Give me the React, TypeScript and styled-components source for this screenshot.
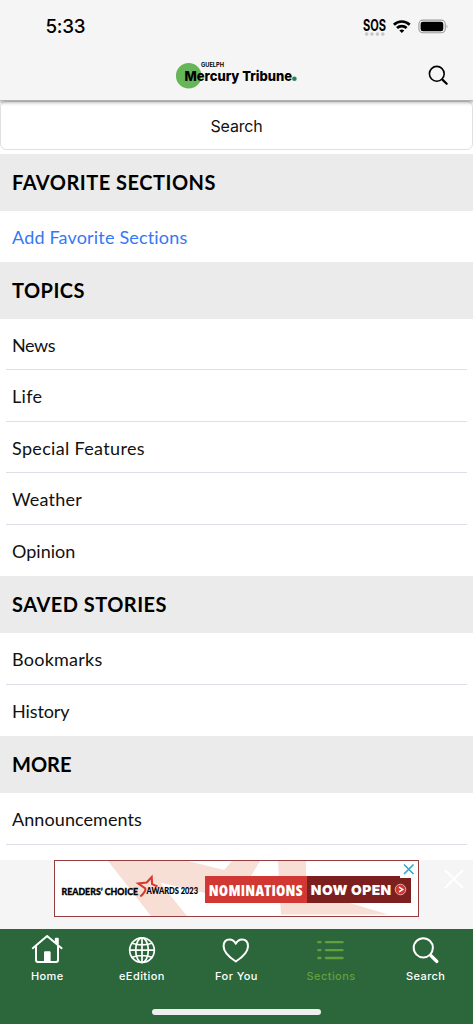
import React from 'react';
import styled, { createGlobalStyle } from 'styled-components';

const GlobalStyle = createGlobalStyle`
  * { box-sizing: border-box; }
  body { margin: 0; background: #fff; color: #000; }
`;

const Screen = styled.div`
  width: 100%;
  max-width: 473px;
  height: 1024px;
  display: flex;
  flex-direction: column;
  overflow: hidden;
  background: #fff;
  font-family: Lato, sans-serif;
`;

const Header = styled.header`
  position: relative;
  z-index: 1;
  flex: 0 0 100px;
  background: #f5f5f5;
  box-shadow: 0 1px 4px 1px rgba(0, 0, 0, 0.4);
`;

const StatusBar = styled.div`
  height: 52px;
  padding: 1px 25px 0 45.5px;
  display: flex;
  align-items: center;
  justify-content: space-between;
`;

const Clock = styled.span`
  font: 500 18.8px/24px Inter, sans-serif;
  letter-spacing: -0.3px;
`;

const StatusIcons = styled.div`
  display: flex;
  align-items: center;
`;

const TitleBar = styled.div`
  height: 48px;
  padding: 0 24px 0 175px;
  display: flex;
  align-items: center;
  justify-content: space-between;
`;

const SearchButton = styled.button`
  flex: 0 0 49px;
  margin: 1px 0 3.6px;
  border: 1px solid #e0e0e0;
  border-radius: 6px;
  background: #fff;
  color: #111;
  padding: 1px 0 0;
  font: 400 16px/46px Inter, sans-serif;
  letter-spacing: -0.2px;
`;

const Content = styled.main`
  flex: 1 1 0;
  min-height: 0;
  overflow: hidden;
`;

const SectionHeading = styled.h2<{ $track: number }>`
  margin: 0;
  height: 57px;
  padding: 0 12px;
  background: #ebebeb;
  font-size: 20px;
  font-weight: 700;
  line-height: 57px;
  letter-spacing: ${p => p.$track}px;
`;

const Row = styled.div<{ $track: number; $link?: boolean; $divided: boolean }>`
  height: 51.45px;
  margin: 0 6px;
  padding: 0 6px;
  border-bottom: ${p => (p.$divided ? '1.4px solid #dfdfe8' : 'none')};
  color: ${p => (p.$link ? '#3478f6' : '#111')};
  font-size: 18px;
  line-height: 52px;
  letter-spacing: ${p => p.$track}px;
  font-variant-ligatures: none;
`;

const AdBar = styled.aside`
  position: relative;
  flex: 0 0 69px;
  padding-left: 54px;
  background: #f5f5f5;
`;

const AdClose = styled.svg`
  position: absolute;
  left: 444px;
  top: 9px;
`;

const Banner = styled.div`
  position: relative;
  width: 365px;
  height: 57px;
  border: 1px solid #963d40;
  background: #fff;
  display: flex;
  align-items: center;
  padding: 1px 7px 0 6px;
`;

const BannerArt = styled.svg`
  position: absolute;
  inset: 0;
`;

const AwardsLogo = styled.svg`
  position: relative;
  flex: 0 0 144px;
`;

const Strip = styled.div<{ $bg: string; $width: number }>`
  position: relative;
  width: ${p => p.$width}px;
  height: 27px;
  background: ${p => p.$bg};
  color: #fff;
  display: flex;
  align-items: center;
  justify-content: center;
  gap: 2px;
  white-space: nowrap;
`;

const StripText = styled.span<{ $size: number; $track: number; $black?: boolean }>`
  padding-top: 1px;
  font-family: ${p => (p.$black ? 'Inter' : '"Open Sans"')}, sans-serif;
  font-size: ${p => p.$size}px;
  font-weight: ${p => (p.$black ? 900 : 800)};
  font-stretch: ${p => (p.$black ? '100%' : '75%')};
  letter-spacing: ${p => p.$track}px;
`;

const AdChoice = styled.svg`
  position: absolute;
  right: 0;
  top: 0;
  background: #fff;
`;

const TabBar = styled.nav`
  position: relative;
  flex: 0 0 95px;
  display: grid;
  grid-template-columns: repeat(5, 1fr);
  background: #2b673b;
`;

const Tab = styled.div<{ $active?: boolean }>`
  display: flex;
  flex-direction: column;
  align-items: center;
  padding-top: 4px;
  color: ${p => (p.$active ? '#659f3c' : '#fff')};
  font: 500 11px/14px Inter, sans-serif;
  letter-spacing: 0.42px;
  svg { display: block; margin-bottom: 2px; }
`;

const HomeIndicator = styled.div`
  position: absolute;
  left: 152px;
  bottom: 9px;
  width: 169px;
  height: 6px;
  border-radius: 3px;
  background: #eee;
`;

type Item = { label: string; track: number; link?: boolean };
type Group = { title: string; track: number; continues?: boolean; rows: Item[] };

const groups: Group[] = [
  { title: 'FAVORITE SECTIONS', track: 0.5, rows: [{ label: 'Add Favorite Sections', track: 0.18, link: true }] },
  {
    title: 'TOPICS', track: 0.45, rows: [
      { label: 'News', track: -0.4 },
      { label: 'Life', track: 0.3 },
      { label: 'Special Features', track: 0.33 },
      { label: 'Weather', track: 0.2 },
      { label: 'Opinion', track: 0 },
    ],
  },
  {
    title: 'SAVED STORIES', track: 0.48, rows: [
      { label: 'Bookmarks', track: 0.24 },
      { label: 'History', track: -0.1 },
    ],
  },
  { title: 'MORE', track: 0, continues: true, rows: [{ label: 'Announcements', track: 0.08 }] },
];

const iconProps = { fill: 'none', stroke: 'currentColor', strokeLinecap: 'round', strokeLinejoin: 'round' } as const;

const StatusGlyphs = () => (
  <svg width="88" height="24" viewBox="360 14.5 88 24">
    <text x="363" y="30.2" textLength="23" lengthAdjust="spacingAndGlyphs" fontFamily="Inter, sans-serif" fontSize="15.3" fontWeight="700">SOS</text>
    {[366.7, 372, 377.4, 382.8].map(x => <circle key={x} cx={x} cy="33.6" r="1.8" fill="#c7c7c7" />)}
    <g fill="none" stroke="#000" strokeWidth="2.7">
      <path d="M393.9 24.2a11.4 11.4 0 0 1 15.8 0" />
      <path d="M397 27.6a7 7 0 0 1 9.6 0" />
    </g>
    <path d="M401.8 32.6l-2.5-2.5a3.8 3.8 0 0 1 5 0z" />
    <rect x="418.9" y="19.6" width="26.4" height="12.7" rx="4" fill="none" stroke="#9c9c9c" strokeWidth="1.1" />
    <rect x="420.6" y="21.2" width="22.7" height="9.6" rx="2.4" />
    <path d="M446.6 24q1.6 2 0 4z" fill="#999" />
  </svg>
);

const Logo = () => (
  <svg width="124" height="32" viewBox="175 60 124 32" fontFamily="Inter, sans-serif">
    <circle cx="188.7" cy="75.7" r="12.8" fill="#66b558" />
    <text x="201" y="67.4" textLength="23" lengthAdjust="spacingAndGlyphs" fontSize="5.8" fontWeight="700">GUELPH</text>
    <text x="184.5" y="81" textLength="107.5" lengthAdjust="spacingAndGlyphs" fontSize="13.8" fontWeight="800">Mercury Tribune</text>
    <circle cx="294.4" cy="78.8" r="2.3" fill="#2a8355" />
  </svg>
);

const HomeIcon = () => (
  <svg width="36" height="34" viewBox="29.2 933 36 34" {...iconProps} strokeWidth="2">
    <path d="M33 948.2L47.3 936 61.8 948.2M36.2 946v14q0 2 2 2h18q2 0 2-2v-14M56 942.5v-3.8h2v5.5" />
    <path d="M44.7 962v-10.2h5.6V962z" fill="currentColor" strokeWidth="1" />
  </svg>
);

const GlobeIcon = () => (
  <svg width="36" height="34" viewBox="124 933 36 34" {...iconProps} strokeWidth="1.7">
    <circle cx="142" cy="950.2" r="12.3" />
    <ellipse cx="142" cy="950.2" rx="6.3" ry="12.3" />
    <path d="M142 938v24.4M129.8 950.2h24.4M132 943.2q10 3.4 20 0M132 957.2q10-3.4 20 0" />
  </svg>
);

const HeartIcon = () => (
  <svg width="36" height="34" viewBox="218.2 933 36 34" {...iconProps} strokeWidth="2">
    <path d="M236 961.5q-12.2-8-12.2-15.3 0-6.8 6-6.8 4 0 6.2 4.3 2.2-4.3 6.2-4.3 6 0 6 6.8 0 7.3-12.2 15.3z" />
  </svg>
);

const ListIcon = () => (
  <svg width="36" height="34" viewBox="313.1 933 36 34" {...iconProps} strokeWidth="2.3">
    {[942.2, 950.1, 958].map(y => <path key={y} d={`M318.4 ${y}h2.2M326 ${y}h16.7`} />)}
  </svg>
);

const TabSearchIcon = () => (
  <svg width="36" height="34" viewBox="407.7 933 36 34" {...iconProps}>
    <circle cx="423" cy="947.8" r="9.6" strokeWidth="2" />
    <path d="M430.5 955.5l6.1 6" strokeWidth="3.2" />
  </svg>
);

const tabs = [
  { label: 'Home', Icon: HomeIcon },
  { label: 'eEdition', Icon: GlobeIcon },
  { label: 'For You', Icon: HeartIcon },
  { label: 'Sections', Icon: ListIcon, active: true },
  { label: 'Search', Icon: TabSearchIcon },
];

export default function App() {
  return (
    <Screen>
      <GlobalStyle />
      <Header>
        <StatusBar>
          <Clock>5:33</Clock>
          <StatusIcons><StatusGlyphs /></StatusIcons>
        </StatusBar>
        <TitleBar>
          <Logo />
          <svg width="22" height="22" viewBox="427 65 22 22" {...iconProps}>
            <circle cx="436.8" cy="73.8" r="7.4" strokeWidth="1.6" />
            <path d="M442.4 79.6l4.3 4.2" strokeWidth="2.2" />
          </svg>
        </TitleBar>
      </Header>
      <SearchButton>Search</SearchButton>
      <Content>
        {groups.map(g => (
          <section key={g.title}>
            <SectionHeading $track={g.track}>{g.title}</SectionHeading>
            {g.rows.map((r, i) => (
              <Row key={r.label} $track={r.track} $link={r.link} $divided={!!g.continues || i < g.rows.length - 1}>
                {r.label}
              </Row>
            ))}
          </section>
        ))}
      </Content>
      <AdBar>
        <Banner>
          <BannerArt width="363" height="55" viewBox="55 861.5 363 55" fill="#f7dfd6">
            <path d="M108 861.5h80l36 9 8-9h28l-9 15-46 17-45-10.5 27 33.5h-36z" />
            <path d="M278 861.5h28v15l44 27 38 11.5H281z" />
          </BannerArt>
          <AwardsLogo width="144" height="55" viewBox="61 861.5 144 55" fontFamily="Lato, sans-serif">
            <path d="M140.3 896q6-5 5-8.2l-7-4.8 8.4-1 5-5.4.4 7 5.4 2.4" fill="none" stroke="#d9392f" strokeWidth="2.1" />
            <g fontWeight="900" stroke="#000">
              <text x="61.5" y="894.2" fontSize="10.2" strokeWidth="0.35" textLength="76.5" lengthAdjust="spacingAndGlyphs">READERS’ CHOICE</text>
              <text x="146.5" y="893.3" fontSize="9.6" strokeWidth="0.1" textLength="51.5" lengthAdjust="spacingAndGlyphs">AWARDS 2023</text>
            </g>
          </AwardsLogo>
          <Strip $bg="#d13733" $width={102}>
            <StripText $size={15} $track={0.25}>NOMINATIONS</StripText>
          </Strip>
          <Strip $bg="#7b1f1f" $width={105}>
            <StripText $size={13.8} $track={0.45} $black>NOW OPEN</StripText>
            <svg width="13" height="13" viewBox="0 0 13 13">
              <circle cx="6.5" cy="6.5" r="5.3" fill="#d13733" stroke="#e9a9a5" />
              <path d="M5 4.2l3.7 2.3L5 8.8" fill="none" stroke="#fff" strokeWidth="1.4" />
            </svg>
          </Strip>
          <AdChoice width="18" height="17" viewBox="0 0 18 17">
            <path d="M4 3.5l9.5 9.5M13.5 3.5L4 13" stroke="#36a5cf" strokeWidth="1.6" />
          </AdChoice>
        </Banner>
        <AdClose width="20" height="20" viewBox="0 0 20 20">
          <path d="M1 1l18 18M19 1L1 19" stroke="#fff" strokeWidth="1.8" />
        </AdClose>
      </AdBar>
      <TabBar>
        {tabs.map(({ label, Icon, active }) => (
          <Tab key={label} $active={active}><Icon />{label}</Tab>
        ))}
        <HomeIndicator />
      </TabBar>
    </Screen>
  );
}
